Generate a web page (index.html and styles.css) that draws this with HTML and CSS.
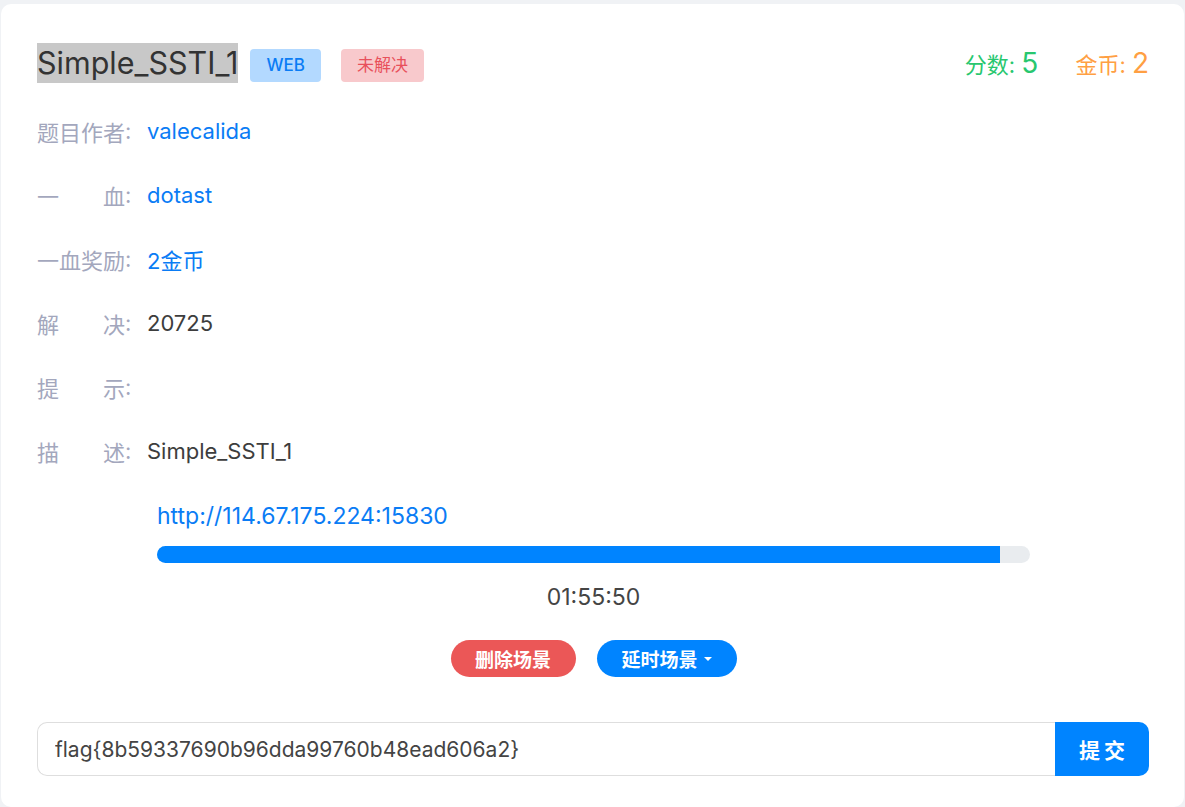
FILE: index.html
```html
<!DOCTYPE html>
<html lang="zh-CN">

<head>
    <meta charset="UTF-8">
    <meta name="viewport" content="width=device-width, initial-scale=1.0">
    <title>Simple_SSTI_1</title>
    <link rel="stylesheet" href="styles.css">
</head>

<body>

    <div class="card">

        <!-- 标题 -->
        <div class="head">
            <div class="head-left">
                <h1><span class="sel">Simple_SSTI_1</span></h1>
                <span class="tag tag-web">WEB</span>
                <span class="tag tag-todo">未解决</span>
            </div>
            <div class="head-right">
                <span class="score">分数: <b>5</b></span>
                <span class="coin">金币: <b>2</b></span>
            </div>
        </div>

        <!-- 信息 -->
        <div class="info">
            <div class="row"><span class="lbl">题目作者</span><span class="colon">:</span><span class="val link">valecalida</span></div>
            <div class="row"><span class="lbl">一血</span><span class="colon">:</span><span class="val link">dotast</span></div>
            <div class="row"><span class="lbl">一血奖励</span><span class="colon">:</span><span class="val link">2金币</span></div>
            <div class="row"><span class="lbl">解决</span><span class="colon">:</span><span class="val">20725</span></div>
            <div class="row"><span class="lbl">提示</span><span class="colon">:</span><span class="val"></span></div>
            <div class="row"><span class="lbl">描述</span><span class="colon">:</span><span class="val">Simple_SSTI_1</span></div>
        </div>

        <!-- 场景 -->
        <div class="scene">
            <a class="url" href="#">http://114.67.175.224:15830</a>
            <div class="bar"><div class="bar-fill" style="width: 96.6%"></div></div>
            <div class="timer">01:55:50</div>
            <div class="actions">
                <button class="pill pill-red">删除场景</button>
                <button class="pill pill-blue">延时场景<span class="caret"></span></button>
            </div>
        </div>

        <!-- 提交 -->
        <div class="submit">
            <input class="flag" type="text" value="flag{8b59337690b96dda99760b48ead606a2}">
            <button class="submit-btn">提交</button>
        </div>

    </div>

</body>
</html>
```

FILE: styles.css
```css
:root {
    --bg:      #f0f2f5;
    --card:    #ffffff;
    --text:    #3d3d3d;
    --label:   #a3a7bd;
    --blue:    #0084ff;
    --link:    #0a7cf5;
    --red:     #eb5757;
    --green:   #28c76f;
    --orange:  #ff9f43;
    --font:    'Inter', 'Noto Sans CJK SC', sans-serif;
}

* {
    box-sizing: border-box;
    margin: 0;
    padding: 0;
}

body {
    background: var(--bg);
    font-family: var(--font);
    color: var(--text);
    padding: 4px 1px 2px 1px;
}

.card {
    background: var(--card);
    border-radius: 10px;
    padding: 39px 35px 31px 36px;
}

/* ── Cabecera ── */
.head {
    display: flex;
    justify-content: space-between;
    align-items: center;
    height: 40px;
}

.head-left {
    display: flex;
    align-items: center;
}

h1 {
    font-size: 30.5px;
    font-weight: 400;
    color: #333;
    line-height: 40px;
}

.sel {
    background: #c8c8c8;
    display: inline-block;
}

.tag {
    font-size: 17px;
    line-height: 33px;
    height: 33px;
    padding: 0 16px;
    border-radius: 4px;
    margin-left: 12px;
    margin-top: 4px;
}

.tag-web {
    background: #b3d9ff;
    color: #0a7cf5;
    font-weight: 500;
}

.tag-todo {
    background: #f8c9cc;
    color: #e8505b;
    margin-left: 20px;
}

.head-right {
    display: flex;
    align-items: baseline;
    gap: 37px;
    font-size: 22px;
}

.head-right b {
    font-weight: 400;
    font-size: 28px;
}

.score { color: var(--green); }
.coin  { color: var(--orange); }

/* ── Filas ── */
.info {
    margin-top: 16px;
}

.row {
    display: flex;
    align-items: center;
    height: 64px;
    font-size: 22px;
}

.lbl {
    width: 88px;
    color: var(--label);
    text-align: justify;
    text-align-last: justify;
}

.colon {
    color: var(--label);
    width: 22px;
}

.val { color: var(--text); }
.val.link { color: var(--link); }

/* ── Escena ── */
.scene {
    padding-left: 120px;
    width: 993px;
    display: flex;
    flex-direction: column;
    align-items: stretch;
}

.url {
    font-size: 23px;
    line-height: 32px;
    color: var(--link);
    text-decoration: none;
    margin-top: 17px;
}

.bar {
    margin-top: 14px;
    height: 17px;
    border-radius: 9px;
    background: #e9ecef;
    overflow: hidden;
}

.bar-fill {
    height: 100%;
    background: var(--blue);
}

.timer {
    margin-top: 18px;
    text-align: center;
    font-size: 23px;
    line-height: 32px;
    color: #444;
}

.actions {
    margin-top: 27px;
    display: flex;
    justify-content: center;
    gap: 21px;
}

.pill {
    border: none;
    height: 37px;
    border-radius: 19px;
    color: #fff;
    font-family: var(--font);
    font-size: 19px;
    font-weight: 700;
    display: inline-flex;
    align-items: center;
    justify-content: center;
}

.pill-red  { background: var(--red); width: 125px; }
.pill-blue { background: var(--blue); width: 140px; }

.caret {
    display: inline-block;
    margin-left: 6px;
    border-left: 4px solid transparent;
    border-right: 4px solid transparent;
    border-top: 4px solid #fff;
}

/* ── Enviar ── */
.submit {
    margin-top: 45px;
    display: flex;
    height: 54px;
}

.flag {
    flex: 1;
    border: 1px solid #dedede;
    border-right: none;
    border-radius: 10px 0 0 10px;
    padding: 0 17px;
    font-family: var(--font);
    font-size: 21px;
    color: #444;
    outline: none;
}

.submit-btn {
    width: 94px;
    border: none;
    background: var(--blue);
    color: #fff;
    border-radius: 0 10px 10px 0;
    font-family: var(--font);
    font-size: 21px;
    font-weight: 700;
    letter-spacing: 4px;
    padding-left: 4px;
}
```
